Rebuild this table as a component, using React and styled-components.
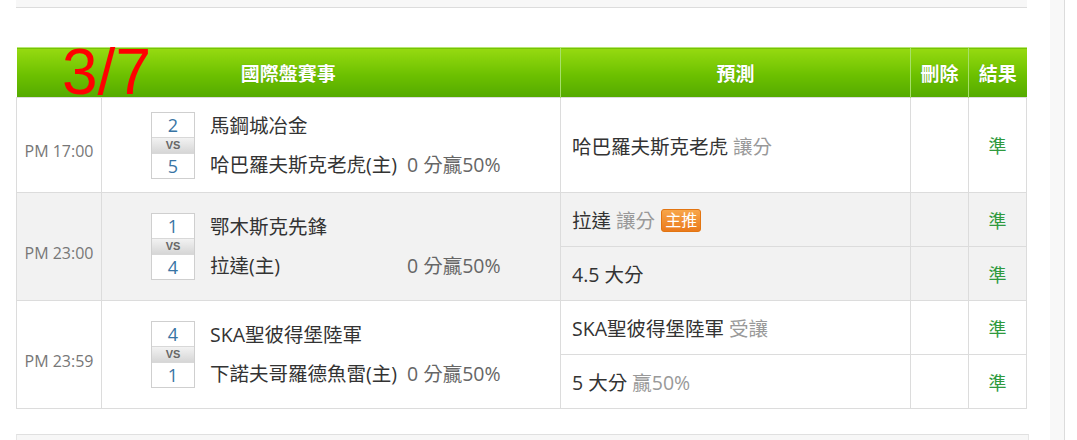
import React from 'react';
import styled, { createGlobalStyle } from 'styled-components';

const FONT = `"Open Sans", "Noto Sans CJK TC", sans-serif`;

const matches = [
  {
    time: 'PM 17:00',
    home: { score: 2, name: '馬鋼城冶金' },
    away: { score: 5, name: '哈巴羅夫斯克老虎(主)' },
    line: '0 分贏50%',
    picks: [{ main: '哈巴羅夫斯克老虎', sub: '讓分', result: '準' }],
  },
  {
    time: 'PM 23:00',
    shaded: true,
    home: { score: 1, name: '鄂木斯克先鋒' },
    away: { score: 4, name: '拉達(主)' },
    line: '0 分贏50%',
    picks: [
      { main: '拉達', sub: '讓分', badge: '主推', result: '準' },
      { main: '4.5 大分', result: '準' },
    ],
  },
  {
    time: 'PM 23:59',
    home: { score: 4, name: 'SKA聖彼得堡陸軍' },
    away: { score: 1, name: '下諾夫哥羅德魚雷(主)' },
    line: '0 分贏50%',
    picks: [
      { main: 'SKA聖彼得堡陸軍', sub: '受讓', result: '準' },
      { main: '5 大分', sub: '贏50%', result: '準' },
    ],
  },
];

const App = () => {
  return (
    <>
      <GlobalStyle />
      <Page>
        <Main>
          <TopStub />
          <TableWrap>
            <PageMark>3/7</PageMark>
            <Table>
              <colgroup>
                <col style={{ width: 85 }} />
                <col style={{ width: 459 }} />
                <col style={{ width: 350 }} />
                <col style={{ width: 58 }} />
                <col style={{ width: 58 }} />
              </colgroup>
              <thead>
                <tr>
                  <HeadCell colSpan={2}>國際盤賽事</HeadCell>
                  <HeadCell>預測</HeadCell>
                  <HeadCell>刪除</HeadCell>
                  <HeadCell>結果</HeadCell>
                </tr>
              </thead>
              <tbody>
                {matches.map((m) =>
                  m.picks.map((p, i) => (
                    <Row key={m.time + i} $shaded={m.shaded} $tall={m.picks.length === 1}>
                      {i === 0 && (
                        <>
                          <TimeCell rowSpan={m.picks.length}>{m.time}</TimeCell>
                          <MatchCell rowSpan={m.picks.length}>
                            <Match>
                              <ScoreBox>
                                <Score>{m.home.score}</Score>
                                <Vs>VS</Vs>
                                <Score>{m.away.score}</Score>
                              </ScoreBox>
                              <Names>
                                <NameLine>{m.home.name}</NameLine>
                                <NameLine>
                                  <Team>{m.away.name}</Team>
                                  <Odds>{m.line}</Odds>
                                </NameLine>
                              </Names>
                            </Match>
                          </MatchCell>
                        </>
                      )}
                      <PickCell>
                        {p.main}
                        {p.sub && <Muted> {p.sub}</Muted>}
                        {p.badge && <Badge>{p.badge}</Badge>}
                      </PickCell>
                      <Cell />
                      <ResultCell>{p.result}</ResultCell>
                    </Row>
                  ))
                )}
              </tbody>
            </Table>
          </TableWrap>
          <NextPanel />
        </Main>
        <SideRail />
      </Page>
    </>
  );
};

export default App;

const GlobalStyle = createGlobalStyle`
  body {
    margin: 0;
    background: #fff;
    font-family: ${FONT};
    color: #333;
  }
`;

const Page = styled.div`
  display: flex;
  height: 440px;
  overflow: hidden;
`;

const Main = styled.div`
  width: 1050px;
  padding: 0 23px 0 16px;
  box-sizing: border-box;
`;

const TopStub = styled.div`
  height: 7px;
  background: #f7f7f7;
  border-bottom: 1px solid #dcdcdc;
`;

const TableWrap = styled.div`
  position: relative;
  margin-top: 39px;
`;

const PageMark = styled.div`
  position: absolute;
  left: 46px;
  top: -6px;
  font-family: "Liberation Sans", sans-serif;
  font-size: 64px;
  line-height: 62px;
  color: #ff0000;
  pointer-events: none;
  z-index: 2;
`;

const Table = styled.table`
  width: 1010px;
  table-layout: fixed;
  border-collapse: collapse;
`;

const HeadCell = styled.th`
  height: 49px;
  padding: 0;
  background: linear-gradient(#96da10, #6cc000 55%, #54aa00);
  border-top: 1px solid #b8e870;
  border-left: 1px solid #a6e06a;
  color: #fff;
  font-size: 19px;
  font-weight: bold;
  text-shadow: 0 0 1px rgba(60, 120, 0, 0.6);
  text-align: center;
  &:first-child {
    border-left: none;
  }
`;

const Row = styled.tr`
  background: ${(p) => (p.$shaded ? '#f2f2f2' : '#fff')};
  height: ${(p) => (p.$tall ? '95px' : '54px')};
`;

const Cell = styled.td`
  padding: 0;
  border: 1px solid #dcdcdc;
  vertical-align: middle;
`;

const TimeCell = styled(Cell)`
  padding-top: 12px;
  text-align: center;
  font-size: 16px;
  color: #777;
`;

const MatchCell = styled(Cell)`
  padding-left: 49px;
`;

const Match = styled.div`
  display: flex;
  align-items: center;
  gap: 15px;
`;

const ScoreBox = styled.div`
  display: flex;
  flex-direction: column;
  width: 42px;
  border: 1px solid #cfcfcf;
  background: #fff;
`;

const Score = styled.div`
  height: 24px;
  line-height: 24px;
  text-align: center;
  font-size: 18px;
  color: #3874a4;
`;

const Vs = styled.div`
  height: 15px;
  line-height: 15px;
  text-align: center;
  font-family: "Liberation Sans", sans-serif;
  font-size: 11px;
  font-weight: bold;
  color: #666;
  background: linear-gradient(#f2f2f2, #d6d6d6);
  border-top: 1px solid #d8d8d8;
  border-bottom: 1px solid #d8d8d8;
`;

const Names = styled.div`
  display: flex;
  flex-direction: column;
  gap: 11px;
`;

const NameLine = styled.div`
  line-height: 28px;
  font-size: 19.5px;
  color: #333;
  white-space: nowrap;
`;

const Team = styled.span`
  display: inline-block;
  min-width: 197px;
`;

const Odds = styled.span`
  color: #666;
`;

const PickCell = styled(Cell)`
  padding-left: 11px;
  font-size: 19.5px;
  color: #333;
  white-space: nowrap;
`;

const Muted = styled.span`
  color: #999;
`;

const Badge = styled.span`
  display: inline-block;
  margin-left: 6px;
  padding: 0 3px;
  height: 21px;
  line-height: 21px;
  font-size: 16px;
  color: #fff;
  background: linear-gradient(#f8a64a, #ea7a1c);
  border: 1px solid #e27512;
  border-radius: 3px;
  vertical-align: 2px;
`;

const ResultCell = styled(Cell)`
  text-align: center;
  font-size: 18px;
  color: #2f9a3e;
`;

const NextPanel = styled.div`
  margin-top: 25px;
  height: 20px;
  width: 1011px;
  background: #f7f7f7;
  border-top: 1px solid #e0e0e0;
  border-left: 1px solid #e6e6e6;
  border-right: 1px solid #e6e6e6;
`;

const SideRail = styled.div`
  width: 14px;
  flex-shrink: 0;
  background: #f8f8f8;
  border-right: 1px solid #dcdcdc;
`;
